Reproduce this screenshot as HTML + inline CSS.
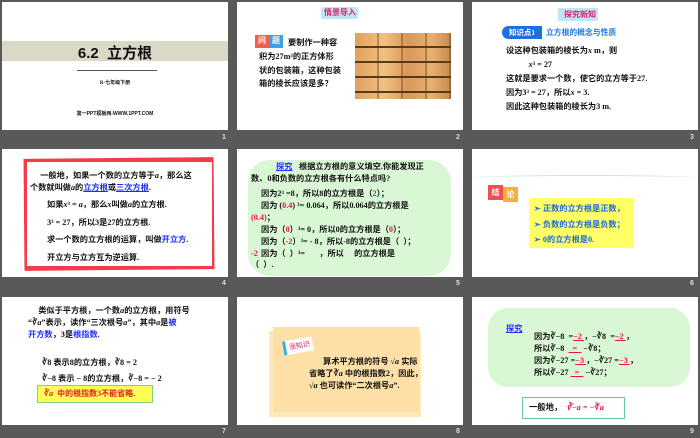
<!DOCTYPE html><html><head><meta charset="utf-8"><style>
*{margin:0;padding:0;box-sizing:border-box}
body{width:700px;height:438px;background:#595959;position:relative;overflow:hidden;font-family:"Liberation Serif","Noto Sans CJK SC",sans-serif;font-weight:bold;color:#111}
.s{position:absolute;width:226px;height:128px;background:#fff;overflow:hidden}
.a{position:absolute;white-space:nowrap}
.n{position:absolute;color:#ddd;font-size:7px;font-family:"Liberation Sans",sans-serif}
.t{font-size:8.2px;line-height:11px}
.b{color:#1a2cff}.r{color:#e8144a}
</style></head><body>
<!-- row1 -->
<div class="s" style="left:2px;top:2px">
 <div class="a" style="left:0;top:39px;width:226px;height:20px;background:#dcd8c8"></div>
 <div class="a" style="left:0;top:40px;width:226px;text-align:center;font:bold 15px 'Liberation Sans','Noto Sans CJK SC',sans-serif">6.2&nbsp; 立方根</div>
 <div class="a" style="left:75px;top:68px;width:80px;height:1px;background:#555"></div>
 <div class="a" style="left:0;top:77px;width:226px;text-align:center;font-size:5px">R·七年级下册</div>
 <div class="a" style="left:0;top:108px;width:226px;text-align:center;font:bold 5px 'Liberation Sans','Noto Sans CJK SC',sans-serif">第一PPT模板网-WWW.1PPT.COM</div>
</div>
<div class="s" style="left:237px;top:2px">
 <div class="a" style="left:84px;top:5px;width:37px;height:12px;background:#bfe6f5;border-radius:2px;color:#e0206a;font-size:8px;text-align:right;padding-right:2px;line-height:12px">情景导入</div>
 <div class="a" style="left:18px;top:33px;width:14px;height:13px;background:#f06050;color:#fff;font-size:8px;text-align:center">问</div>
 <div class="a" style="left:32px;top:33px;width:14px;height:13px;background:#3aa0e8;color:#fff;font-size:8px;text-align:center">题</div>
 <div class="a t" style="left:51px;top:35px">要制作一种容</div>
 <div class="a t" style="left:22px;top:48px;line-height:13.5px">积为27m³的正方体形<br>状的包装箱，这种包装<br>箱的棱长应该是多？</div>
 <div class="a" style="left:118px;top:31px;width:96px;height:66px;background:linear-gradient(90deg,#e0a060,#f0c080 30%,#d89858 55%,#e8b070 80%,#c88850);"></div>
 <div class="a" style="left:118px;top:31px;width:96px;height:66px;background:repeating-linear-gradient(180deg,transparent 0 13px,#5a3a1a 13px 15px),repeating-linear-gradient(90deg,transparent 0 22px,rgba(90,60,30,.4) 22px 24px)"></div>
</div>
<div class="s" style="left:472px;top:2px">
 <div class="a" style="left:86px;top:6px;width:40px;height:13px;background:#bfe6f5;color:#e0206a;font-size:8px;text-align:right;padding-right:2px;line-height:13px">探究新知</div>
 <div class="a" style="left:30px;top:24px;width:40px;height:13px;background:#1f6fe0;border-radius:7px 0 0 7px;color:#fff;font-size:7.5px;line-height:13px;text-align:center">知识点1</div>
 <div class="a b" style="left:74px;top:25px;font-size:7.8px;color:#1e78e0">立方根的概念与性质</div>
 <div class="a t" style="left:34px;top:42px;line-height:14px">设这种包装箱的棱长为<i>x</i> m，则<br>&nbsp;&nbsp;&nbsp;&nbsp;&nbsp;&nbsp;&nbsp;&nbsp;&nbsp;&nbsp;&nbsp;<i>x</i>³ = 27<br>这就是要求一个数，使它的立方等于27.<br>因为3³ = 27，所以<i>x</i> = 3.<br>因此这种包装箱的棱长为3 m.</div>
</div>
<div class="n" style="left:222px;top:134px">1</div><div class="n" style="left:456px;top:134px">2</div><div class="n" style="left:690px;top:134px">3</div>
<!-- row2 -->
<div class="s" style="left:2px;top:149px">
 <div class="a" style="left:22px;top:9px;width:190px;height:112px;background:#f53a4a;transform:rotate(-0.5deg)"></div>
 <div class="a" style="left:25px;top:13px;width:185px;height:104px;background:#fff"></div>
 <div class="a t" style="left:28px;top:21px;line-height:12px">&nbsp;&nbsp;&nbsp;&nbsp;&nbsp;一般地，如果一个数的立方等于<i>a</i>，那么这<br>个数就叫做<i>a</i>的<span class="b" style="text-decoration:underline">立方根</span>或<span class="b" style="text-decoration:underline">三次方根</span>.</div>
 <div class="a t" style="left:45px;top:47px;line-height:17.5px">如果<i>x</i>³ = <i>a</i>，那么<i>x</i>叫做<i>a</i>的立方根.<br>3³ = 27，所以3是27的立方根.<br>求一个数的立方根的运算，叫做<span class="b">开立方</span>.<br>开立方与立方互为逆运算.</div>
</div>
<div class="s" style="left:237px;top:149px">
 <div class="a" style="left:11px;top:11px;width:203px;height:116px;background:#d9f7d4;border-radius:22px"></div>
 <div class="a t" style="left:39px;top:12px;color:#1a2cff;text-decoration:underline">探究</div>
 <div class="a t" style="left:62px;top:12px">根据立方根的意义填空.你能发现正</div>
 <div class="a t" style="left:14px;top:24px">数、0和负数的立方根各有什么特点吗?</div>
 <div class="a t" style="left:24px;top:39px;line-height:12px">因为2³ =8，所以8的立方根是（<span class="r">2</span>）；<br>因为 (<span class="r">0.4</span>) ³= 0.064，所以0.064的立方根是<br></div>
 <div class="a t" style="left:14px;top:63px"><span class="r">(0.4)</span>；</div>
 <div class="a t" style="left:24px;top:75px;line-height:12px">因为（<span class="r">0</span>）³= 0，所以0的立方根是（<span class="r">0</span>）；<br>因为（<span class="r">-2</span>）³= - 8，所以-8的立方根是（&nbsp; ）；<br>因为（&nbsp; ）³= &nbsp;&nbsp;&nbsp;&nbsp;&nbsp;&nbsp;，所以&nbsp;&nbsp;&nbsp;&nbsp;&nbsp;的立方根是</div>
 <div class="a t r" style="left:14px;top:99px">-2</div>
 <div class="a t" style="left:14px;top:110px">（&nbsp; ）.</div>
</div>
<div class="s" style="left:472px;top:149px">
 <div class="a" style="left:0;top:26px;width:226px;height:6px;border-top:1px solid #cfe6dc;border-radius:50%"></div>
 <div class="a" style="left:16px;top:36px;width:15px;height:15px;background:#f05050;color:#fff;font-size:8px;text-align:center;line-height:15px">结</div>
 <div class="a" style="left:31px;top:38px;width:15px;height:15px;background:#f5b040;color:#fff;font-size:8px;text-align:center;line-height:15px">论</div>
 <div class="a" style="left:57px;top:49px;width:105px;height:50px;background:#ffff66"></div>
 <div class="a t" style="left:62px;top:52px;line-height:15.5px;color:#1a6ad8">➢ 正数的立方根是正数，<br>➢ 负数的立方根是负数；<br>➢ 0的立方根是0.</div>
</div>
<div class="n" style="left:222px;top:280px">4</div><div class="n" style="left:456px;top:280px">5</div><div class="n" style="left:690px;top:280px">6</div>
<!-- row3 -->
<div class="s" style="left:2px;top:297px">
 <div class="a t" style="left:26px;top:8px;line-height:12px">&nbsp;&nbsp;&nbsp;&nbsp;&nbsp;类似于平方根，一个数<i>a</i>的立方根，用符号<br>“∛<i>a</i>”表示，读作“三次根号<i>a</i>”，其中<i>a</i>是<span class="b">被</span><br><span class="b">开方数</span>，3是<span class="b">根指数</span>.</div>
 <div class="a t" style="left:40px;top:58px;line-height:16px">∛8 表示8的立方根，∛8 = 2<br>∛−8 表示 − 8的立方根，∛−8 = − 2</div>
 <div class="a" style="left:35px;top:88px;width:116px;height:18px;background:#ffff55;border:1px solid #8c8;color:#e02020;font-size:8px;line-height:16px;padding-left:6px">∛<i>a</i>&nbsp; 中的根指数3不能省略.</div>
</div>
<div class="s" style="left:237px;top:297px">
 <div class="a" style="left:32px;top:34px;width:152px;height:86px;background:#fde8b8"></div>
 <div class="a" style="left:36px;top:30px;width:146px;height:85px;background:#fde0a8"></div>
 <div class="a" style="left:46px;top:42px;width:30px;height:14px;background:#fff;border-left:3px solid #3ab0e0;color:#e0206a;font:7px 'Noto Sans CJK SC',sans-serif;line-height:14px;text-align:center;transform:rotate(-10deg)">涨知识</div>
 <div class="a t" style="left:86px;top:59px;line-height:12px">算术平方根的符号 √<i>a</i> 实际</div>
 <div class="a t" style="left:72px;top:71px;line-height:12px">省略了∛<i>a</i> 中的根指数2，因此，<br>√<i>a</i> 也可读作“二次根号<i>a</i>”.</div>
</div>
<div class="s" style="left:472px;top:297px">
 <div class="a" style="left:16px;top:11px;width:202px;height:79px;background:#d9f7d4;border-radius:20px"></div>
 <div class="a t" style="left:34px;top:26px;color:#1a2cff;text-decoration:underline">探究</div>
 <div class="a t" style="left:62px;top:34px;line-height:12px">因为∛−8 &nbsp;=<u class="r">−2&nbsp;</u>，−∛8 &nbsp;=<u class="r">−2&nbsp;</u>，<br>所以∛−8 &nbsp;<u class="r">&nbsp;&nbsp;=&nbsp;&nbsp;</u> −∛8；<br>因为∛−27 =<u class="r">−3&nbsp;</u>，−∛27 =<u class="r">−3&nbsp;</u>，<br>所以∛−27 <u class="r">&nbsp;&nbsp;=&nbsp;&nbsp;</u> −∛27；</div>
 <div class="a" style="left:50px;top:100px;width:103px;height:22px;border:1px solid #6c9;font-size:8.3px;line-height:20px;padding-left:6px">一般地， &nbsp;<span class="r"><i>∛−a</i> = −∛<i>a</i></span></div>
</div>
<div class="n" style="left:222px;top:428px">7</div><div class="n" style="left:456px;top:428px">8</div><div class="n" style="left:690px;top:428px">9</div>
</body></html>
